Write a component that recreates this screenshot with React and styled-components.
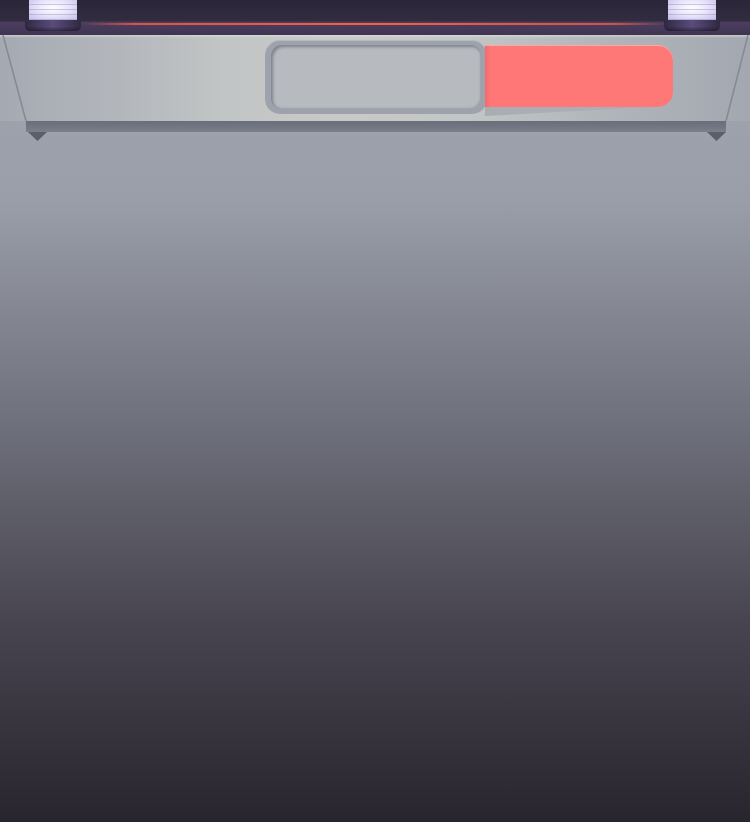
import styled, { createGlobalStyle } from "styled-components";

const Global = createGlobalStyle`
  html, body { margin: 0; padding: 0; }
  body { font-family: "Liberation Sans", Arial, sans-serif; }
`

const Page = styled.div`
  width: 750px;
  height: 822px;
  overflow: hidden;
  display: flex;
  flex-direction: column;
  background: linear-gradient(180deg, #a3a7b0 0px, #9a9ea8 200px, #6f717c 420px, #484550 620px, #28252f 822px);
`

const Header = styled.div`
  height: 35px;
  display: flex;
  justify-content: space-between;
  align-items: flex-start;
  padding: 0 30px 0 25px;
  background:
    linear-gradient(90deg, transparent 11%, rgba(240,90,62,0.85) 18%, #f4603f 50%, rgba(240,90,62,0.8) 82%, transparent 89%) 0 23px / 100% 2px no-repeat,
    linear-gradient(180deg, #2a2637 0px, #322c41 21px, #4c3d5f 22px, #3f3452 35px);
`

const Lamp = styled.div`
  width: 56px;
  display: flex;
  flex-direction: column;
  align-items: center;
`

const Glass = styled.div`
  width: 48px;
  height: 20px;
  background:
    repeating-linear-gradient(180deg, transparent 0 4px, rgba(150,140,200,0.45) 4px 5px),
    radial-gradient(ellipse at 50% 40%, #ffffff 0%, #eae6fa 45%, #c5bde6 100%);
`

const Base = styled.div`
  width: 56px;
  height: 11px;
  border-radius: 2px 2px 5px 5px;
  background:
    linear-gradient(180deg, rgba(0,0,0,0) 60%, rgba(20,16,30,0.55) 100%),
    linear-gradient(90deg, #2f2840 0%, #4a3e66 30%, #5a4c7c 50%, #4a3e66 70%, #2f2840 100%);
`

const Shelf = styled.div`
  position: relative;
  height: 86px;
  display: flex;
  align-items: flex-start;
  padding-left: 265px;
  background:
    linear-gradient(180deg, rgba(225,226,218,0.6) 0px, rgba(225,226,218,0) 3px),
    linear-gradient(90deg, #a5a9b2 0%, #b3b7bc 16%, #c2c5c5 30%, #c7cac8 45%, #c3c6c6 62%, #b2b6bb 80%, #a3a7b0 100%);
`

const Sides = styled.svg`
  position: absolute;
  left: 0;
  top: 0;
`

const Window = styled.div`
  width: 222px;
  height: 74px;
  margin-top: 5px;
  box-sizing: border-box;
  padding: 5px 6px;
  border-radius: 15px;
  background: #9da2ad;
  box-shadow: inset 0 1px 0 rgba(255,255,255,0.25);
  display: flex;
`

const Glass2 = styled.div`
  flex: 1;
  border-radius: 11px;
  background: #b7bbbf;
  box-shadow: inset 2px 2px 3px rgba(80,85,100,0.55), inset -1px -1px 2px rgba(120,125,135,0.4);
`

const Tab = styled.div`
  position: relative;
  width: 188px;
  height: 62px;
  margin-top: 10px;
  margin-left: -2px;
  border-radius: 0 15px 15px 0;
  background: linear-gradient(90deg, #f26a6a 0px, #ff7777 6px, #ff7878 100%);
  box-shadow: inset 0 1px 0 rgba(255,200,180,0.6);
`

const TabShadow = styled.div`
  position: absolute;
  left: 0;
  top: 62px;
  width: 165px;
  height: 9px;
  background: linear-gradient(90deg, rgba(120,125,135,0.32), rgba(120,125,135,0.05));
  clip-path: polygon(0 0, 100% 0, 0 100%);
`

const Rim = styled.div`
  margin: 0 24px 0 26px;
  height: 11px;
  background: linear-gradient(180deg, #6a6e79 0%, #737783 60%, #7c808a 100%);
`

const Feet = styled.div`
  display: flex;
  justify-content: space-between;
  margin: 0 24px 0 28px;
`

const Foot = styled.div`
  width: 19px;
  height: 9px;
  background: #5b5f69;
  clip-path: polygon(0 0, 100% 0, 50% 100%);
`

const App = () => {
    return (
        <>
            <Global />
            <Page>
                <Header>
                    <Lamp>
                        <Glass />
                        <Base />
                    </Lamp>
                    <Lamp>
                        <Glass />
                        <Base />
                    </Lamp>
                </Header>
                <Shelf>
                    <Sides width="750" height="86" viewBox="0 0 750 86">
                        <line x1="3" y1="0" x2="26" y2="86" stroke="#868a94" strokeWidth="1.6" />
                        <line x1="748" y1="0" x2="726" y2="86" stroke="#868a94" strokeWidth="1.6" />
                    </Sides>
                    <Window>
                        <Glass2 />
                    </Window>
                    <Tab>
                        <TabShadow />
                    </Tab>
                </Shelf>
                <Rim />
                <Feet>
                    <Foot />
                    <Foot />
                </Feet>
            </Page>
        </>
    )
}

export default App
